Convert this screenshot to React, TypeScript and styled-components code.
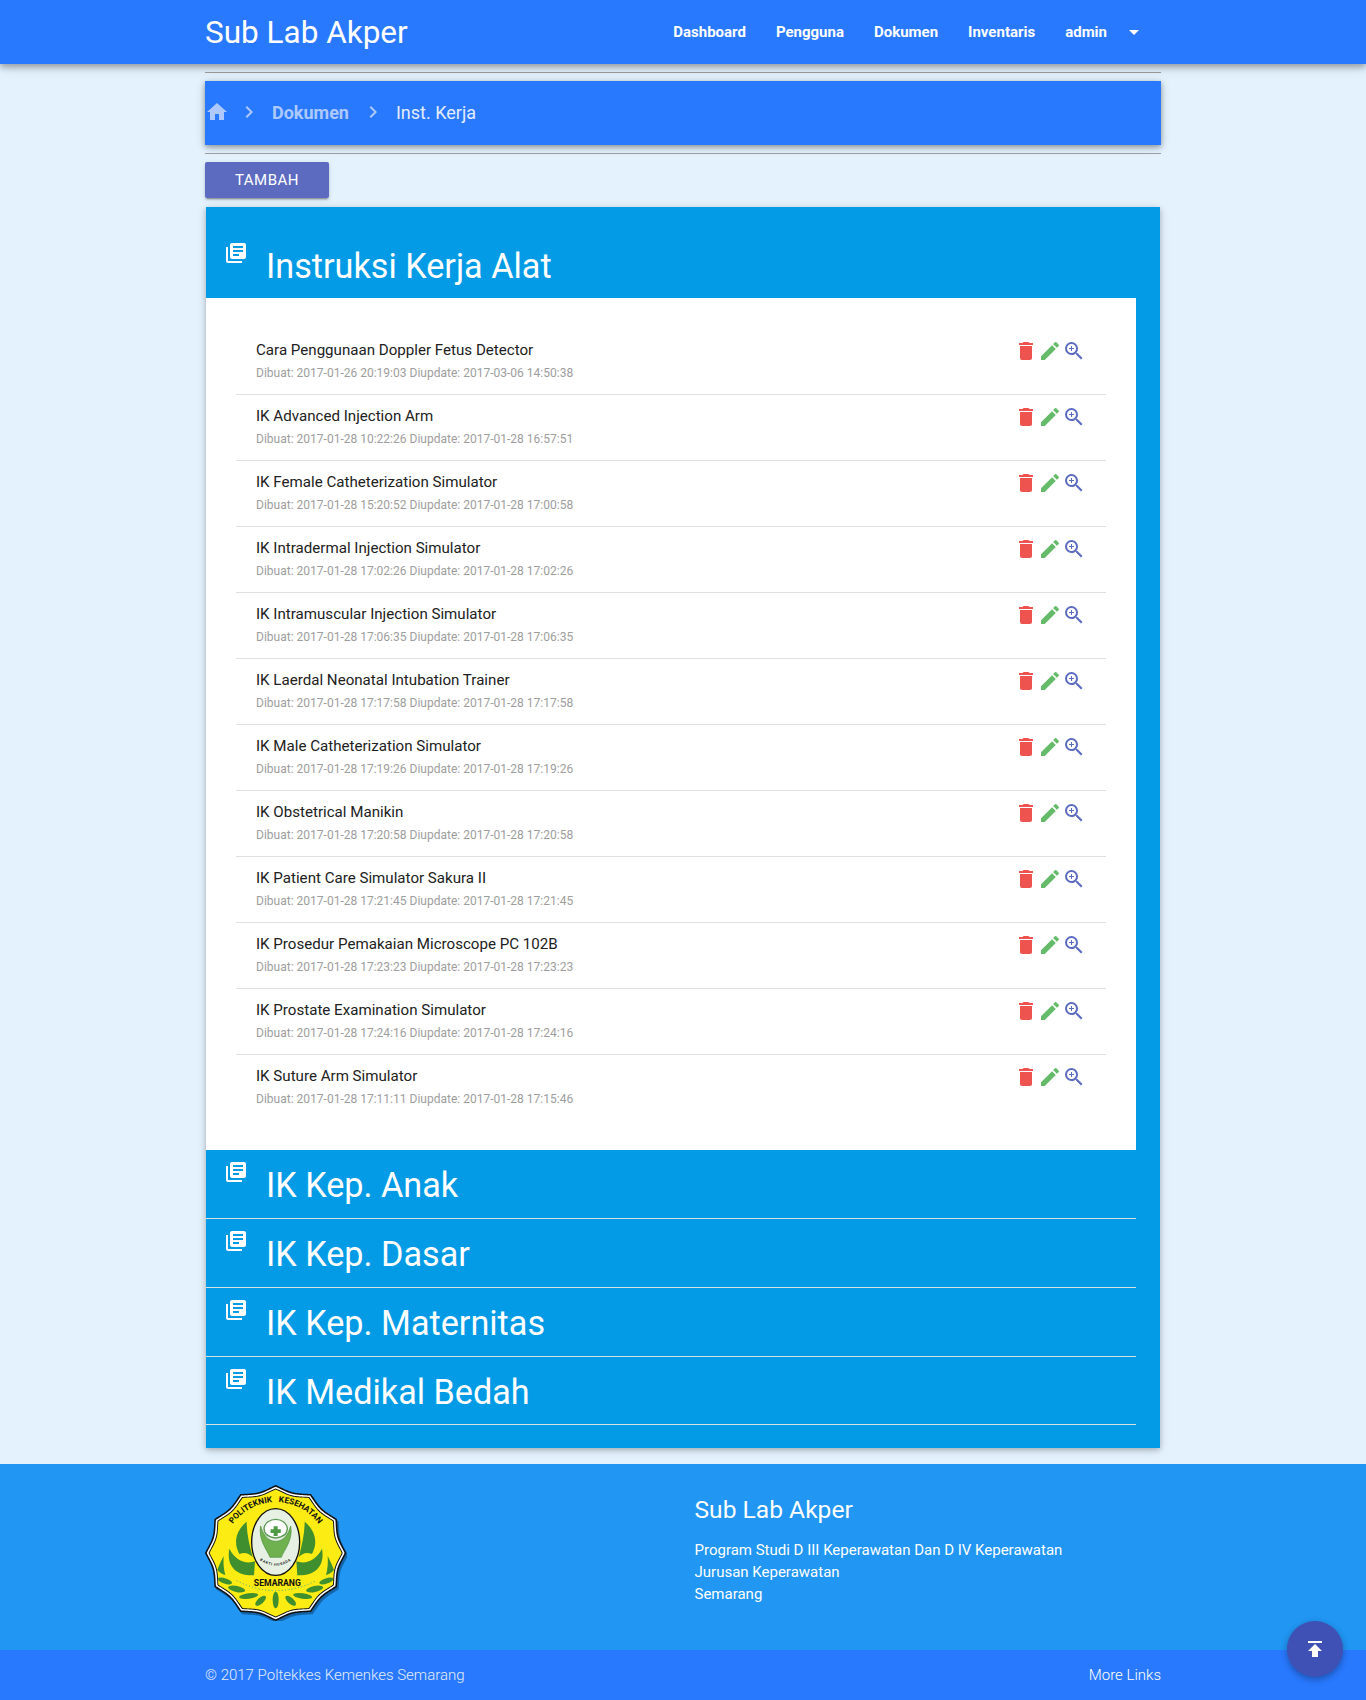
import React from "react";
import styled, { createGlobalStyle } from "styled-components";
import { MdHome, MdChevronRight, MdDelete, MdEdit, MdZoomIn, MdLibraryBooks, MdPublish, MdArrowDropDown } from "react-icons/md";

const Global = createGlobalStyle`
  html, body { margin: 0; padding: 0; background: #e3f2fd; }
  body { font-family: Roboto, "Liberation Sans", sans-serif; color: #212121; }
`;

const Page = styled.div`
  width: 1366px;
  height: 1700px;
  position: relative;
  overflow: hidden;
  background: #e3f2fd;
`;
const NavBar = styled.header`
  position: relative;
  z-index: 2;
  height: 64px;
  background: #2979ff;
  box-shadow: 0 3px 6px rgba(0, 0, 0, 0.28), 0 4px 12px rgba(0, 0, 0, 0.12);
`;
const Wrap = styled.div`
  width: 956px;
  margin: 0 auto;
`;
const NavInner = styled(Wrap)`
  height: 64px;
  display: flex;
  align-items: center;
  justify-content: space-between;
`;
const Brand = styled.a`
  font-size: 31.5px;
  color: #fff;
  line-height: 62px;
  padding-top: 2px;
`;
const NavLinks = styled.nav`
  display: flex;
  align-items: center;
  gap: 30px;
  padding-right: 15px;
`;
const NavLink = styled.a`
  font-size: 15px;
  font-weight: 700;
  color: #fff;
`;
const Caret = styled.span`
  display: flex;
  margin-left: -15px;
  color: #fff;
  font-size: 24px;
`;
const Rule = styled.hr<{ $top: number }>`
  margin: ${(p) => p.$top}px 0 8px;
  border: 0;
  border-top: 1px solid #9e9e9e;
  height: 0;
`;
const Crumbs = styled.div`
  height: 64px;
  box-sizing: border-box;
  padding-bottom: 2px;
  background: #2979ff;
  display: flex;
  align-items: center;
  box-shadow: 0 2px 5px rgba(0, 0, 0, 0.3), 0 2px 10px rgba(0, 0, 0, 0.16);
`;
const CrumbHome = styled.span`
  display: flex;
  font-size: 24px;
  color: #adc9ff;
  margin-right: -4px;
`;
const CrumbSep = styled.span`
  display: flex;
  font-size: 24px;
  color: #adc9ff;
  margin: 0 11px 0 12px;
`;
const CrumbLink = styled.a`
  font-size: 18px;
  font-weight: 700;
  color: #adc9ff;
`;
const CrumbCurrent = styled.span`
  font-size: 18px;
  color: #e3edff;
`;
const AddButton = styled.button`
  display: block;
  width: 124px;
  height: 36px;
  border: 0;
  border-radius: 2px;
  background: #5c6bc0;
  color: #fff;
  font-family: Roboto, sans-serif;
  font-size: 15px;
  letter-spacing: 0.5px;
  padding: 0;
  box-shadow: 0 2px 2px rgba(0, 0, 0, 0.14), 0 1px 5px rgba(0, 0, 0, 0.12), 0 3px 1px -2px rgba(0, 0, 0, 0.2);
`;
const Card = styled.section`
  margin: 9px 1px 0;
  height: 1241px;
  background: #039be5;
  padding-right: 24px;
  box-sizing: border-box;
  box-shadow: 0 2px 5px rgba(0, 0, 0, 0.2), 0 2px 10px rgba(0, 0, 0, 0.12);
`;
const GroupHead = styled.div<{ $first?: boolean; $height: number }>`
  display: flex;
  align-items: flex-start;
  box-sizing: border-box;
  height: ${(p) => p.$height}px;
  padding: ${(p) => (p.$first ? "34px" : "10px")} 0 0 18px;
  color: #fff;
  border-bottom: ${(p) => (p.$first ? "0" : "1px solid #d8e0e4")};
`;
const GroupIcon = styled.span`
  display: flex;
  font-size: 24px;
  color: #fff;
  width: 42px;
`;
const GroupTitle = styled.h3`
  margin: 5px 0 0;
  font-size: 34.2px;
  font-weight: 400;
  line-height: 40px;
  color: #fff;
`;
const Body = styled.div`
  background: #fff;
  height: 852px;
  box-sizing: border-box;
  padding: 31px 30px 0 30px;
`;
const Row = styled.div<{ $last?: boolean }>`
  display: flex;
  justify-content: space-between;
  box-sizing: border-box;
  height: 66px;
  padding: 11px 20px 0 20px;
  border-bottom: ${(p) => (p.$last ? "0" : "1px solid #e0e0e0")};
`;
const RowText = styled.div`
  display: flex;
  flex-direction: column;
`;
const RowTitle = styled.div`
  font-size: 15.12px;
  line-height: 20px;
  color: #212121;
`;
const RowMeta = styled.div`
  margin-top: 4px;
  font-size: 12.03px;
  line-height: 18px;
  color: #9e9e9e;
`;
const Actions = styled.div`
  display: flex;
  width: 72px;
  height: 24px;
  font-size: 24px;
  margin-top: -1px;
`;
const Action = styled.span<{ $c: string }>`
  display: flex;
  color: ${(p) => p.$c};
`;
const Footer = styled.footer`
  position: absolute;
  top: 1464px;
  left: 0;
  right: 0;
  height: 236px;
  background: #2196f3;
`;
const FooterTop = styled(Wrap)`
  display: flex;
  height: 186px;
  box-sizing: border-box;
`;
const LogoCol = styled.div`
  width: 489.5px;
  padding-top: 21px;
  svg { display: block; }
`;
const InfoCol = styled.div`
  padding-top: 31px;
  color: #fff;
`;
const InfoTitle = styled.h5`
  margin: 0 0 14px;
  font-size: 24.6px;
  font-weight: 400;
  line-height: 30px;
`;
const InfoLine = styled.div`
  font-size: 15px;
  line-height: 22px;
`;
const FooterBar = styled.div`
  height: 50px;
  background: #2979ff;
`;
const FooterBarInner = styled(Wrap)`
  height: 50px;
  display: flex;
  align-items: center;
  justify-content: space-between;
`;
const Copy = styled.span`
  font-size: 15px;
  font-weight: 300;
  color: #e3edff;
`;
const MoreLinks = styled.a`
  font-size: 15px;
  font-weight: 300;
  color: #fff;
`;
const Fab = styled.button`
  position: absolute;
  left: 1287px;
  top: 1621px;
  width: 56px;
  height: 56px;
  border: 0;
  border-radius: 50%;
  background: #3f51b5;
  color: #fff;
  padding: 0;
  display: flex;
  align-items: center;
  justify-content: center;
  font-size: 24px;
  box-shadow: 0 3px 6px rgba(0, 0, 0, 0.2), 0 2px 8px rgba(0, 0, 0, 0.12);
`;

const outline = (() => {
  const cx = 257, cy = 249, pts: string[] = [];
  for (let i = 0; i <= 360; i++) {
    const a = (i / 360) * Math.PI * 2;
    const k = 1 - 0.075 * Math.abs(Math.sin(a * 6));
    const x = cx + 212 * k * Math.sin(a);
    const y = cy - 204 * k * Math.cos(a);
    pts.push(`${x.toFixed(1)},${y.toFixed(1)}`);
  }
  return pts.join(" ");
})();

const Logo = () => {
  const ring = (s: number, fill: string) => (
    <polygon points={outline} fill={fill} transform={`translate(257 249) scale(${s}) translate(-257 -249)`} />
  );
  const leaves: [number, number, number, number, number][] = [
    [105, 333, 18, 22, 8], [140, 357, 12, 26, 9], [176, 378, -8, 29, 8], [212, 392, -42, 20, 9],
  ];
  const green = "#3f8f2f";
  const side = (
    <g fill={green}>
      <path d="M170 155 C140 180 128 215 148 252 C165 245 178 250 188 262 C178 225 170 190 170 155Z" />
      <path d="M118 236 C108 290 140 318 192 316 L195 274 C165 284 136 270 118 236Z" />
      <path d="M101 258 C93 275 85 290 82 300 C90 308 100 315 106 315 C100 295 100 275 101 258Z" />
      {leaves.map(([x, y, r, rx, ry]) => (
        <ellipse key={x} cx={x} cy={y} rx={rx} ry={ry} transform={`rotate(${r} ${x} ${y})`} />
      ))}
    </g>
  );
  return (
    <svg width="142" height="136" viewBox="45 45 426 408">
      <defs>
        <path id="logoArc" d="M 122 172 A 156 152 0 0 1 392 172" />
        <path id="mottoArc" d="M 198 262 Q 257 312 316 262" />
      </defs>
      <polygon points={outline} fill="#1565a8" transform="translate(5 7)" />
      {ring(1, "#111")}
      {ring(0.975, "#fff")}
      {ring(0.95, "#111")}
      {ring(0.935, "#fdec13")}
      {side}
      <g transform="translate(514 0) scale(-1 1)">{side}</g>
      <ellipse cx="257" cy="390" rx="9" ry="25" fill={green} />
      <path d="M140 332 Q257 392 378 332" fill="none" stroke="#35a9a0" strokeWidth="3" strokeDasharray="3 7" />
      <text fontFamily="Roboto, sans-serif" fontSize="25" fontWeight="700" fill="#111">
        <textPath href="#logoArc" startOffset="50%" textAnchor="middle">POLITEKNIK&#160;&#160;&#160;KESEHATAN</textPath>
      </text>
      <ellipse cx="257" cy="216" rx="72" ry="100" fill="#e6f0e3" stroke="#111" strokeWidth="4" />
      <path d="M212 168 C204 210 232 240 240 262 L274 262 C282 240 310 210 302 168 C296 190 282 214 257 214 C232 214 218 190 212 168Z" fill="#6fb04f" stroke="#4d8f3f" strokeWidth="2" />
      <path d="M222 175 C224 158 240 148 257 148 C274 148 290 158 292 175 C292 192 278 202 257 204 C236 202 222 192 222 175Z" fill="#fff" stroke="#5f9a55" strokeWidth="4" />
      <path d="M250 166h14v11h11v13h-11v11h-14v-11h-11v-13h11Z" fill="#4f9a45" transform="translate(257 183) scale(.85) translate(-257 -183)" />
      <text fontFamily="Roboto, sans-serif" fontSize="11" fontWeight="700" fill="#222" letterSpacing="2">
        <textPath href="#mottoArc" startOffset="50%" textAnchor="middle">BAKTI HUSADA</textPath>
      </text>
      <text x="262" y="349" textAnchor="middle" fontFamily="Roboto, sans-serif" fontSize="26" fontWeight="700" fill="#111">SEMARANG</text>
    </svg>
  );
};

const items: [string, string, string][] = [
  ["Cara Penggunaan Doppler Fetus Detector", "2017-01-26 20:19:03", "2017-03-06 14:50:38"],
  ["IK Advanced Injection Arm", "2017-01-28 10:22:26", "2017-01-28 16:57:51"],
  ["IK Female Catheterization Simulator", "2017-01-28 15:20:52", "2017-01-28 17:00:58"],
  ["IK Intradermal Injection Simulator", "2017-01-28 17:02:26", "2017-01-28 17:02:26"],
  ["IK Intramuscular Injection Simulator", "2017-01-28 17:06:35", "2017-01-28 17:06:35"],
  ["IK Laerdal Neonatal Intubation Trainer", "2017-01-28 17:17:58", "2017-01-28 17:17:58"],
  ["IK Male Catheterization Simulator", "2017-01-28 17:19:26", "2017-01-28 17:19:26"],
  ["IK Obstetrical Manikin", "2017-01-28 17:20:58", "2017-01-28 17:20:58"],
  ["IK Patient Care Simulator Sakura II", "2017-01-28 17:21:45", "2017-01-28 17:21:45"],
  ["IK Prosedur Pemakaian Microscope PC 102B", "2017-01-28 17:23:23", "2017-01-28 17:23:23"],
  ["IK Prostate Examination Simulator", "2017-01-28 17:24:16", "2017-01-28 17:24:16"],
  ["IK Suture Arm Simulator", "2017-01-28 17:11:11", "2017-01-28 17:15:46"],
];
const groups: [string, number][] = [["IK Kep. Anak", 69], ["IK Kep. Dasar", 69], ["IK Kep. Maternitas", 69], ["IK Medikal Bedah", 68]];

export default function App() {
  return (
    <Page>
      <Global />
      <NavBar>
        <NavInner>
          <Brand>Sub Lab Akper</Brand>
          <NavLinks>
            <NavLink>Dashboard</NavLink>
            <NavLink>Pengguna</NavLink>
            <NavLink>Dokumen</NavLink>
            <NavLink>Inventaris</NavLink>
            <NavLink>admin</NavLink>
            <Caret><MdArrowDropDown /></Caret>
          </NavLinks>
        </NavInner>
      </NavBar>
      <Wrap>
        <Rule $top={8} />
        <Crumbs>
          <CrumbHome><MdHome /></CrumbHome>
          <CrumbSep><MdChevronRight /></CrumbSep>
          <CrumbLink>Dokumen</CrumbLink>
          <CrumbSep><MdChevronRight /></CrumbSep>
          <CrumbCurrent>Inst. Kerja</CrumbCurrent>
        </Crumbs>
        <Rule $top={8} />
        <AddButton>TAMBAH</AddButton>
        <Card>
          <GroupHead $first $height={91}>
            <GroupIcon><MdLibraryBooks /></GroupIcon>
            <GroupTitle>Instruksi Kerja Alat</GroupTitle>
          </GroupHead>
          <Body>
            {items.map(([t, c, u], i) => (
              <Row key={t} $last={i === items.length - 1}>
                <RowText>
                  <RowTitle>{t}</RowTitle>
                  <RowMeta>Dibuat: {c} Diupdate: {u}</RowMeta>
                </RowText>
                <Actions>
                  <Action $c="#ef5350"><MdDelete /></Action>
                  <Action $c="#66bb6a"><MdEdit /></Action>
                  <Action $c="#5c6bc0"><MdZoomIn /></Action>
                </Actions>
              </Row>
            ))}
          </Body>
          {groups.map(([g, h]) => (
            <GroupHead key={g} $height={h}>
              <GroupIcon><MdLibraryBooks /></GroupIcon>
              <GroupTitle>{g}</GroupTitle>
            </GroupHead>
          ))}
        </Card>
      </Wrap>
      <Footer>
        <FooterTop>
          <LogoCol><Logo /></LogoCol>
          <InfoCol>
            <InfoTitle>Sub Lab Akper</InfoTitle>
            <InfoLine>Program Studi D III Keperawatan Dan D IV Keperawatan</InfoLine>
            <InfoLine>Jurusan Keperawatan</InfoLine>
            <InfoLine>Semarang</InfoLine>
          </InfoCol>
        </FooterTop>
        <FooterBar>
          <FooterBarInner>
            <Copy>© 2017 Poltekkes Kemenkes Semarang</Copy>
            <MoreLinks>More Links</MoreLinks>
          </FooterBarInner>
        </FooterBar>
      </Footer>
      <Fab><MdPublish /></Fab>
    </Page>
  );
}
